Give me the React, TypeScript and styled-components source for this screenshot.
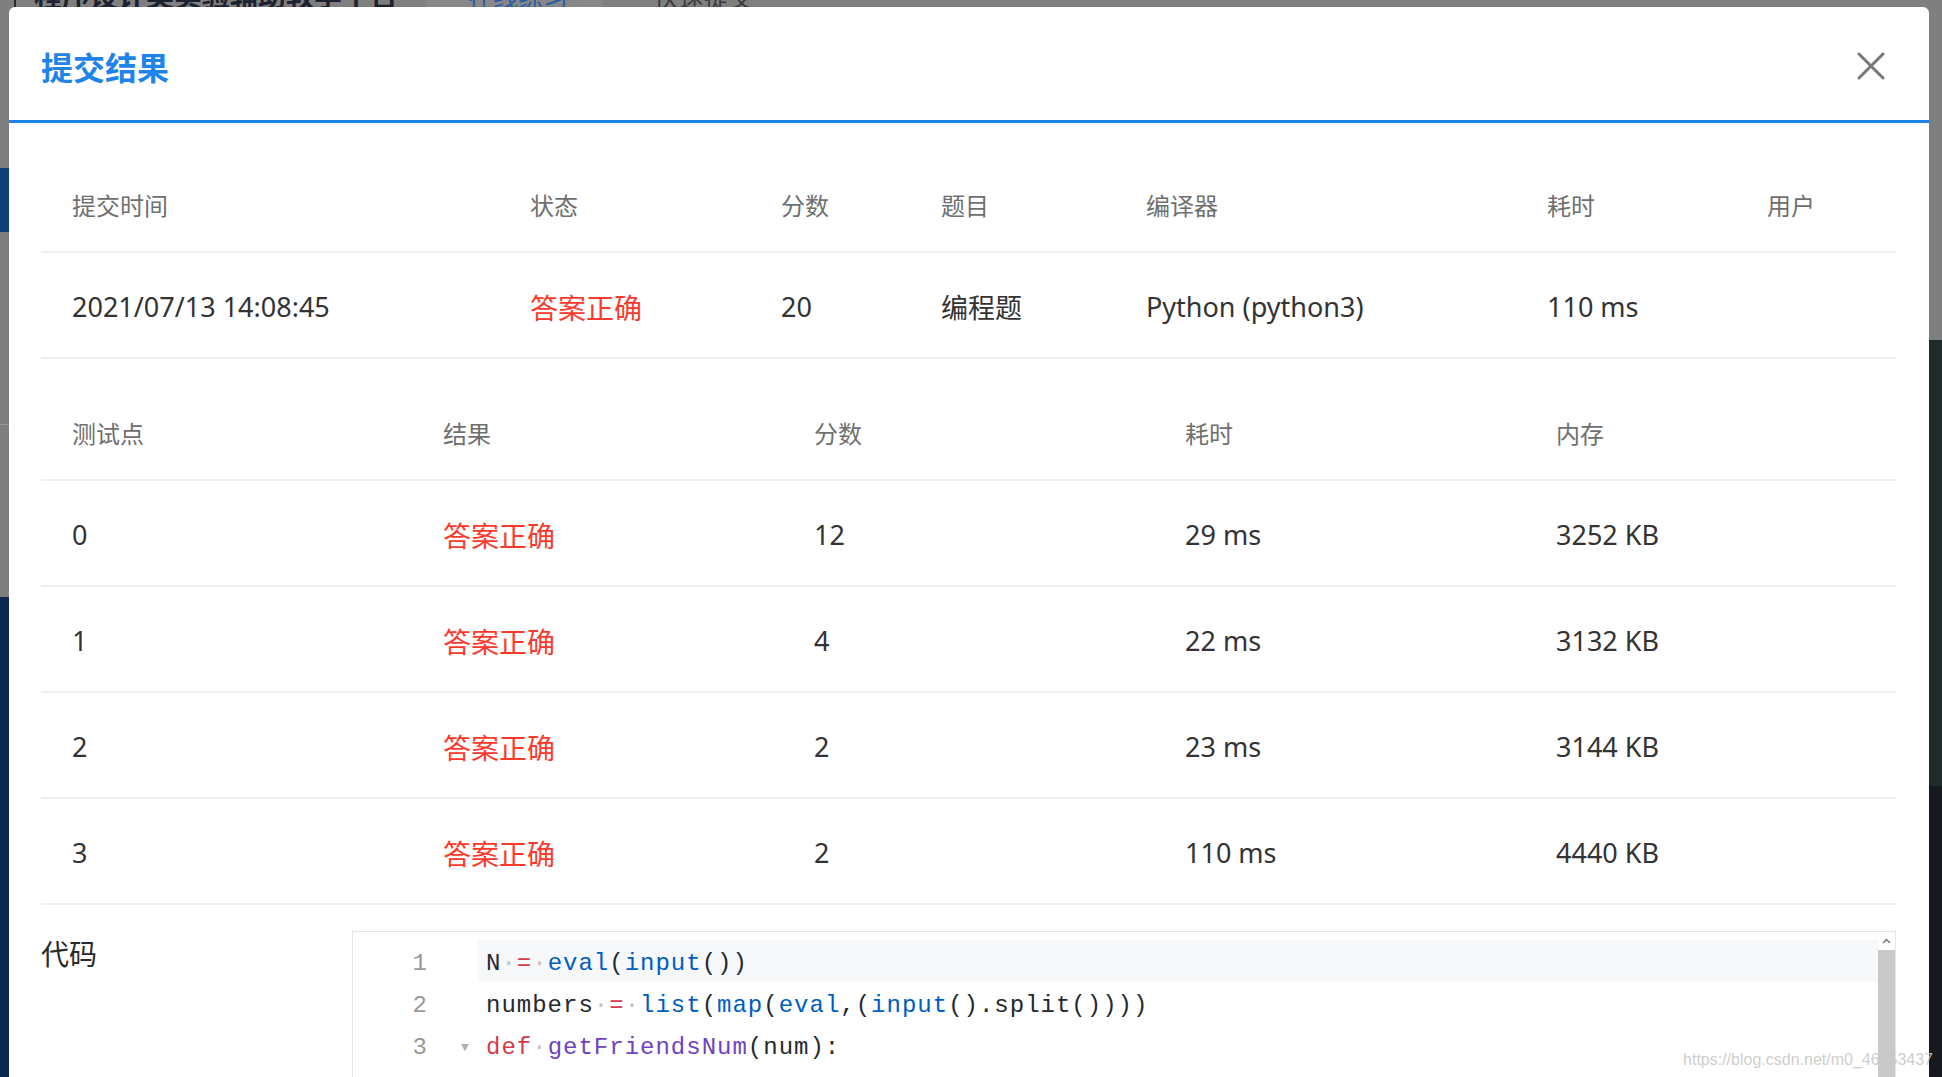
import styled, { createGlobalStyle } from "styled-components";

const GlobalStyle = createGlobalStyle`
  html, body {
    margin: 0;
    padding: 0;
    height: 100%;
    overflow: hidden;
  }
  body {
    font-family: "Noto Sans", "Noto Sans CJK SC", sans-serif;
    background: #7f7f7f;
  }
  * {
    box-sizing: border-box;
  }
`;

const Screen = styled.div`
  position: relative;
  display: grid;
  grid-template-columns: 9px 1920px 1fr;
  grid-template-rows: 7px 1fr;
  height: 100vh;
  overflow: hidden;
  background: #7f7f7f;
`;

/* page behind the dialog, only its edges show */
const TopStrip = styled.div`
  grid-column: 1 / -1;
  display: flex;
  align-items: flex-end;
  height: 7px;
  padding-left: 14px;
  overflow: hidden;
`;
const StripRule = styled.div`
  width: 2px;
  height: 7px;
  background: #2b2b2b;
`;
const Brand = styled.span`
  margin: 0 0 -3px 18px;
  font-size: 28px;
  line-height: 1;
  font-weight: 700;
  color: #1d2230;
  white-space: nowrap;
`;
const NavTab = styled.div<{ $active?: boolean }>`
  display: flex;
  align-items: flex-end;
  height: 7px;
  margin-left: ${(p) => (p.$active ? "28px" : "52px")};
  padding-left: ${(p) => (p.$active ? "42px" : "0")};
  width: ${(p) => (p.$active ? "176px" : "auto")};
  background: ${(p) => (p.$active ? "#878787" : "transparent")};

  span {
    margin-bottom: -3px;
    font-size: 25px;
    line-height: 1;
    color: ${(p) => (p.$active ? "#2a5da6" : "#3b3b3b")};
    white-space: nowrap;
  }
`;

const SideStrip = styled.div`
  display: flex;
  flex-direction: column;
  overflow: hidden;
`;
const StripPart = styled.div<{ $h?: number; $bg: string }>`
  flex: ${(p) => (p.$h ? `0 0 ${p.$h}px` : "1")};
  background: ${(p) => p.$bg};
`;

/* dialog */
const Modal = styled.div`
  display: flex;
  flex-direction: column;
  background: #fff;
  border-radius: 6px 6px 0 0;
  overflow: hidden;
`;
const ModalHeader = styled.header`
  display: flex;
  align-items: center;
  justify-content: space-between;
  flex: 0 0 116px;
  padding: 4px 44px 0 32px;
  border-bottom: 3px solid #1e83e9;
`;
const Title = styled.h1`
  margin: 0;
  font-family: "Noto Sans CJK SC", sans-serif;
  font-size: 32px;
  font-weight: 700;
  color: #1f84ea;
`;
const CloseBtn = styled.button`
  display: flex;
  padding: 0;
  border: none;
  background: none;
  cursor: pointer;
`;

const Body = styled.div`
  padding: 0 33px 0 32px;
`;
const Table = styled.div<{ $top: number }>`
  margin-top: ${(p) => p.$top}px;
`;
const Row = styled.div<{ $cols: string; $head?: boolean }>`
  display: grid;
  grid-template-columns: ${(p) => p.$cols};
  align-items: center;
  height: ${(p) => (p.$head ? "100px" : "106px")};
  padding-top: ${(p) => (p.$head ? "4px" : "3px")};
  border-bottom: 2px solid #efefef;
`;
const HeadCell = styled.div`
  padding-left: 31px;
  font-size: 24px;
  color: #6f6f6f;
  white-space: nowrap;
`;
const Cell = styled.div<{ $ok?: boolean }>`
  padding-left: 31px;
  font-size: ${(p) => (p.$ok ? "28px" : "27px")};
  color: ${(p) => (p.$ok ? "#fb3a2e" : "#333")};
  white-space: nowrap;
`;

const CodeSection = styled.div`
  display: grid;
  grid-template-columns: 311px 1fr;
  margin-top: 26px;
`;
const CodeLabel = styled.div`
  padding-top: 2px;
  font-size: 28px;
  line-height: 42px;
  color: #2a2a2a;
`;
const Editor = styled.div`
  display: grid;
  grid-template-columns: 125px 1fr 17px;
  height: 200px;
  border: 1px solid #e6e6e6;
  border-bottom: none;
  font-family: "Liberation Mono", "DejaVu Sans Mono", monospace;
  font-size: 24px;
`;
const Gutter = styled.div`
  padding-top: 8px;
`;
const GutterRow = styled.div`
  display: grid;
  grid-template-columns: 74px 51px;
  align-items: center;
  height: 42px;
  padding-top: 5px;
  color: #999;

  span:first-child {
    text-align: right;
  }
  span:last-child {
    padding-left: 34px;
    font-size: 13px;
    color: #b0b0b0;
  }
`;
const Lines = styled.div`
  padding-top: 8px;
`;
const Line = styled.div<{ $active?: boolean }>`
  height: 42px;
  line-height: 48px;
  padding-left: 8px;
  letter-spacing: 1px;
  white-space: pre;
  color: #24292e;
  background: ${(p) => (p.$active ? "#f6f8fa" : "transparent")};
`;
const Tok = styled.span<{ $k: string }>`
  color: ${(p) =>
    ({
      p: "#24292e",
      ws: "#c4c4c4",
      op: "#d73a49",
      fn: "#005cc5",
      kw: "#d73a49",
      def: "#6f42c1",
    } as Record<string, string>)[p.$k]};
`;
const ScrollBar = styled.div`
  display: flex;
  flex-direction: column;
  background: #f1f1f1;
`;
const ScrollArrow = styled.div`
  display: flex;
  align-items: center;
  justify-content: center;
  flex: 0 0 18px;
  background: #fff;
`;
const ScrollThumb = styled.div`
  flex: 1;
  background: #c9c9c9;
`;

const Watermark = styled.div`
  position: absolute;
  right: 9px;
  bottom: 8px;
  font-family: "Liberation Sans", sans-serif;
  font-size: 16px;
  color: rgba(200, 200, 200, 0.9);
`;

const summaryCols = "458px 251px 160px 205px 401px 220px 1fr";
const caseCols = "repeat(5, 1fr)";

const cases = [
  { id: 0, score: 12, time: "29 ms", mem: "3252 KB" },
  { id: 1, score: 4, time: "22 ms", mem: "3132 KB" },
  { id: 2, score: 2, time: "23 ms", mem: "3144 KB" },
  { id: 3, score: 2, time: "110 ms", mem: "4440 KB" },
];

const code: [string, string][][] = [
  [
    ["N", "p"],
    ["·", "ws"],
    ["=", "op"],
    ["·", "ws"],
    ["eval", "fn"],
    ["(", "p"],
    ["input", "fn"],
    ["())", "p"],
  ],
  [
    ["numbers", "p"],
    ["·", "ws"],
    ["=", "op"],
    ["·", "ws"],
    ["list", "fn"],
    ["(", "p"],
    ["map", "fn"],
    ["(", "p"],
    ["eval", "fn"],
    [",(", "p"],
    ["input", "fn"],
    ["().split())))", "p"],
  ],
  [
    ["def", "kw"],
    ["·", "ws"],
    ["getFriendsNum", "def"],
    ["(num):", "p"],
  ],
];

function App() {
  return (
    <>
      <GlobalStyle />
      <Screen>
        <TopStrip>
          <StripRule />
          <Brand>程序设计类实验辅助教学平台</Brand>
          <NavTab $active>
            <span>在线练习</span>
          </NavTab>
          <NavTab>
            <span>快速提交</span>
          </NavTab>
        </TopStrip>

        <SideStrip>
          <StripPart $h={161} $bg="#7f7f7f" />
          <StripPart $h={64} $bg="#0e3e79" />
          <StripPart $h={192} $bg="#7f7f7f" />
          <StripPart $h={1} $bg="#999" />
          <StripPart $h={172} $bg="#7f7f7f" />
          <StripPart $bg="#0b2951" />
        </SideStrip>

        <Modal>
          <ModalHeader>
            <Title>提交结果</Title>
            <CloseBtn>
              <svg width="28" height="28" viewBox="0 0 28 28">
                <path
                  d="M2 2 L26 26 M26 2 L2 26"
                  stroke="#777"
                  strokeWidth="3"
                  strokeLinecap="round"
                />
              </svg>
            </CloseBtn>
          </ModalHeader>

          <Body>
            <Table $top={30}>
              <Row $cols={summaryCols} $head>
                <HeadCell>提交时间</HeadCell>
                <HeadCell>状态</HeadCell>
                <HeadCell>分数</HeadCell>
                <HeadCell>题目</HeadCell>
                <HeadCell>编译器</HeadCell>
                <HeadCell>耗时</HeadCell>
                <HeadCell>用户</HeadCell>
              </Row>
              <Row $cols={summaryCols}>
                <Cell>2021/07/13 14:08:45</Cell>
                <Cell $ok>答案正确</Cell>
                <Cell>20</Cell>
                <Cell>编程题</Cell>
                <Cell>Python (python3)</Cell>
                <Cell>110 ms</Cell>
                <Cell></Cell>
              </Row>
            </Table>

            <Table $top={22}>
              <Row $cols={caseCols} $head>
                <HeadCell>测试点</HeadCell>
                <HeadCell>结果</HeadCell>
                <HeadCell>分数</HeadCell>
                <HeadCell>耗时</HeadCell>
                <HeadCell>内存</HeadCell>
              </Row>
              {cases.map((c) => (
                <Row $cols={caseCols} key={c.id}>
                  <Cell>{c.id}</Cell>
                  <Cell $ok>答案正确</Cell>
                  <Cell>{c.score}</Cell>
                  <Cell>{c.time}</Cell>
                  <Cell>{c.mem}</Cell>
                </Row>
              ))}
            </Table>

            <CodeSection>
              <CodeLabel>代码</CodeLabel>
              <Editor>
                <Gutter>
                  {code.map((_, i) => (
                    <GutterRow key={i}>
                      <span>{i + 1}</span>
                      <span>{i === 2 ? "▼" : ""}</span>
                    </GutterRow>
                  ))}
                </Gutter>
                <Lines>
                  {code.map((line, i) => (
                    <Line key={i} $active={i === 0}>
                      {line.map(([t, k], j) => (
                        <Tok key={j} $k={k}>
                          {t}
                        </Tok>
                      ))}
                    </Line>
                  ))}
                </Lines>
                <ScrollBar>
                  <ScrollArrow>
                    <svg width="9" height="6" viewBox="0 0 9 6">
                      <path d="M1 5 L4.5 1.5 L8 5" stroke="#777" strokeWidth="1.5" fill="none" />
                    </svg>
                  </ScrollArrow>
                  <ScrollThumb />
                </ScrollBar>
              </Editor>
            </CodeSection>
          </Body>
        </Modal>

        <SideStrip>
          <StripPart $h={333} $bg="#7f7f7f" />
          <StripPart $h={446} $bg="#1f2a2b" />
          <StripPart $bg="#161a1e" />
        </SideStrip>

        <Watermark>https://blog.csdn.net/m0_46653437</Watermark>
      </Screen>
    </>
  );
}

export default App;
